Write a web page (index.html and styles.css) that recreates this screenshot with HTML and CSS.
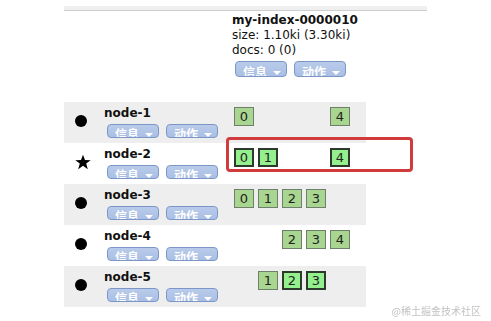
FILE: index.html
```html
<!DOCTYPE html>
<html>
<head>
    <title>Cluster Overview</title>
    <link rel="stylesheet" href="styles.css">
</head>
<body>
    <div class="page">
        <div class="top-bar"></div>

        <div class="index-header">
            <div class="index-name">my-index-0000010</div>
            <div>size: 1.10ki (3.30ki)</div>
            <div>docs: 0 (0)</div>
            <div class="btn-group">
                <span class="drop-btn">信息 <i class="caret"></i></span>
                <span class="drop-btn">动作 <i class="caret"></i></span>
            </div>
        </div>

        <div class="node-row">
            <div class="node-icon"><span class="dot"></span></div>
            <div class="node-info">
                <div class="node-name">node-1</div>
                <div class="btn-group">
                    <span class="drop-btn">信息 <i class="caret"></i></span>
                    <span class="drop-btn">动作 <i class="caret"></i></span>
                </div>
            </div>
            <div class="shards">
                <span class="shard c0">0</span>
                <span class="shard c4">4</span>
            </div>
        </div>

        <div class="node-row">
            <div class="node-icon">
                <svg width="16" height="16" viewBox="0 0 24 24">
                    <polygon points="12,1 15,9 23.5,9.2 16.8,14.4 19.2,22.8 12,17.8 4.8,22.8 7.2,14.4 0.5,9.2 9,9" fill="#000"></polygon>
                </svg>
            </div>
            <div class="node-info">
                <div class="node-name">node-2</div>
                <div class="btn-group">
                    <span class="drop-btn">信息 <i class="caret"></i></span>
                    <span class="drop-btn">动作 <i class="caret"></i></span>
                </div>
            </div>
            <div class="shards">
                <span class="shard primary c0">0</span>
                <span class="shard primary c1">1</span>
                <span class="shard primary c4">4</span>
            </div>
            <div class="highlight"></div>
        </div>

        <div class="node-row">
            <div class="node-icon"><span class="dot"></span></div>
            <div class="node-info">
                <div class="node-name">node-3</div>
                <div class="btn-group">
                    <span class="drop-btn">信息 <i class="caret"></i></span>
                    <span class="drop-btn">动作 <i class="caret"></i></span>
                </div>
            </div>
            <div class="shards">
                <span class="shard c0">0</span>
                <span class="shard c1">1</span>
                <span class="shard c2">2</span>
                <span class="shard c3">3</span>
            </div>
        </div>

        <div class="node-row">
            <div class="node-icon"><span class="dot"></span></div>
            <div class="node-info">
                <div class="node-name">node-4</div>
                <div class="btn-group">
                    <span class="drop-btn">信息 <i class="caret"></i></span>
                    <span class="drop-btn">动作 <i class="caret"></i></span>
                </div>
            </div>
            <div class="shards">
                <span class="shard c2">2</span>
                <span class="shard c3">3</span>
                <span class="shard c4">4</span>
            </div>
        </div>

        <div class="node-row">
            <div class="node-icon"><span class="dot"></span></div>
            <div class="node-info">
                <div class="node-name">node-5</div>
                <div class="btn-group">
                    <span class="drop-btn">信息 <i class="caret"></i></span>
                    <span class="drop-btn">动作 <i class="caret"></i></span>
                </div>
            </div>
            <div class="shards">
                <span class="shard c1">1</span>
                <span class="shard primary c2">2</span>
                <span class="shard primary c3">3</span>
            </div>
        </div>
    </div>

    <div class="watermark">@稀土掘金技术社区</div>
</body>
</html>
```

FILE: styles.css
```css
:root {
    --row-bg: #eeeeee;
    --text-color: #111111;
    --btn-bg: #a9bfe4;
    --btn-border: #7c97c7;
    --replica-bg: #a8d58f;
    --replica-border: #6f7f6a;
    --primary-bg: #94f08c;
    --primary-border: #2e3a2e;
    --mark-color: #d23b3b;
}
* {
    box-sizing: border-box;
}
body {
    font-family: "DejaVu Sans", Verdana, "Noto Sans CJK SC", sans-serif;
    font-size: 12px;
    line-height: 15px;
    margin: 0;
    padding: 0;
    background-color: #ffffff;
    color: var(--text-color);
}
.page {
    padding-left: 64px;
}
.top-bar {
    width: 363px;
    height: 5px;
    margin-top: 6px;
    background-color: #efefef;
    border-bottom: 1px solid #cfcfcf;
}
.index-header {
    padding: 2px 0 0 168px;
    margin-bottom: 25px;
}
.index-name {
    font-weight: bold;
}
.index-header .btn-group {
    margin-top: 3px;
    padding-left: 3px;
}
.index-header .drop-btn {
    height: 16px;
    padding-top: 3px;
}
.btn-group {
    display: flex;
    gap: 7px;
}
.drop-btn {
    display: block;
    width: 52px;
    height: 14px;
    overflow: hidden;
    padding: 2px 0 0 7px;
    font-family: "Noto Sans CJK SC", sans-serif;
    font-size: 12px;
    line-height: 14px;
    font-weight: bold;
    color: #ffffff;
    white-space: nowrap;
    background: linear-gradient(#b9cbea, var(--btn-bg));
    border: 1px solid var(--btn-border);
    border-radius: 4px;
}
.caret {
    display: inline-block;
    width: 0;
    height: 0;
    margin-left: 3px;
    vertical-align: 2px;
    border-left: 4px solid transparent;
    border-right: 4px solid transparent;
    border-top: 4px solid #ffffff;
}
.node-row {
    position: relative;
    display: grid;
    grid-template-columns: 40px 128px 134px;
    width: 302px;
    height: 41px;
}
.node-row:nth-of-type(odd) {
    background-color: var(--row-bg);
}
.node-icon {
    display: flex;
    align-items: center;
    padding: 0 0 3px 11px;
}
.dot {
    width: 12px;
    height: 12px;
    border-radius: 50%;
    background-color: #000000;
}
.node-info {
    padding-top: 4px;
}
.node-name {
    font-weight: bold;
}
.node-info .btn-group {
    margin-top: 3px;
    padding-left: 3px;
}
.shards {
    display: grid;
    grid-template-columns: repeat(5, 20px);
    column-gap: 4px;
    align-content: start;
    padding: 5px 0 0 2px;
}
.shard {
    grid-row: 1;
    height: 19px;
    font-size: 13px;
    line-height: 17px;
    text-align: center;
    color: #222222;
    background-color: var(--replica-bg);
    border: 1px solid var(--replica-border);
}
.shard.primary {
    line-height: 15px;
    background-color: var(--primary-bg);
    border: 2px solid var(--primary-border);
}
.c0 { grid-column: 1; }
.c1 { grid-column: 2; }
.c2 { grid-column: 3; }
.c3 { grid-column: 4; }
.c4 { grid-column: 5; }
.highlight {
    position: absolute;
    left: 162px;
    top: -6px;
    width: 187px;
    height: 35px;
    border: 3px solid var(--mark-color);
    border-radius: 4px;
}
.watermark {
    position: fixed;
    right: 10px;
    bottom: 3px;
    font-family: "Noto Sans CJK SC", sans-serif;
    font-size: 10px;
    color: #c2c2c2;
}
```
